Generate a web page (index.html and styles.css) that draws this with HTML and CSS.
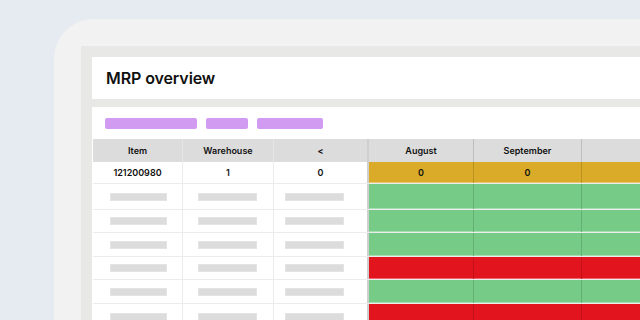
FILE: index.html
```html
<!DOCTYPE html>
<html lang="en">
<head>
    <meta charset="UTF-8" />
    <title>MRP overview</title>
    <link rel="stylesheet" href="styles.css">
</head>
<body>
    <div class="device">
        <div class="screen">
            <div class="title-card">
                <h1>MRP overview</h1>
            </div>

            <div class="table-card">
                <div class="filters">
                    <span class="pill pill-wide"></span>
                    <span class="pill pill-short"></span>
                    <span class="pill pill-mid"></span>
                </div>

                <div class="row head">
                    <div class="cell">Item</div>
                    <div class="cell">Warehouse</div>
                    <div class="cell">&lt;</div>
                    <div class="cell month">August</div>
                    <div class="cell month">September</div>
                    <div class="cell month"></div>
                </div>

                <div class="row r1">
                    <div class="cell">121200980</div>
                    <div class="cell">1</div>
                    <div class="cell">0</div>
                    <div class="cell month yellow">0</div>
                    <div class="cell month yellow">0</div>
                    <div class="cell month yellow"></div>
                </div>

                <div class="row r2">
                    <div class="cell blank"><span class="ph"></span></div>
                    <div class="cell blank"><span class="ph"></span></div>
                    <div class="cell blank"><span class="ph"></span></div>
                    <div class="cell month green"></div>
                    <div class="cell month green"></div>
                    <div class="cell month green"></div>
                </div>

                <div class="row r3">
                    <div class="cell blank"><span class="ph"></span></div>
                    <div class="cell blank"><span class="ph"></span></div>
                    <div class="cell blank"><span class="ph"></span></div>
                    <div class="cell month green"></div>
                    <div class="cell month green"></div>
                    <div class="cell month green"></div>
                </div>

                <div class="row r4">
                    <div class="cell blank"><span class="ph"></span></div>
                    <div class="cell blank"><span class="ph"></span></div>
                    <div class="cell blank"><span class="ph"></span></div>
                    <div class="cell month green"></div>
                    <div class="cell month green"></div>
                    <div class="cell month green"></div>
                </div>

                <div class="row r3">
                    <div class="cell blank"><span class="ph"></span></div>
                    <div class="cell blank"><span class="ph"></span></div>
                    <div class="cell blank"><span class="ph"></span></div>
                    <div class="cell month red"></div>
                    <div class="cell month red"></div>
                    <div class="cell month red"></div>
                </div>

                <div class="row r4">
                    <div class="cell blank"><span class="ph"></span></div>
                    <div class="cell blank"><span class="ph"></span></div>
                    <div class="cell blank"><span class="ph"></span></div>
                    <div class="cell month green"></div>
                    <div class="cell month green"></div>
                    <div class="cell month green"></div>
                </div>

                <div class="row r2">
                    <div class="cell blank"><span class="ph"></span></div>
                    <div class="cell blank"><span class="ph"></span></div>
                    <div class="cell blank"><span class="ph"></span></div>
                    <div class="cell month red"></div>
                    <div class="cell month red"></div>
                    <div class="cell month red"></div>
                </div>
            </div>
        </div>
    </div>
</body>
</html>
```

FILE: styles.css
```css
* {
    box-sizing: border-box;
    font-family: "Inter", "Liberation Sans", sans-serif;
}

html,
body {
    margin: 0;
    width: 640px;
    height: 320px;
    overflow: hidden;
}

body {
    background-color: #e6ebf2;
    padding: 19px 0 0 54px;
}

.device {
    height: 301px;
    overflow: hidden;
    background-color: #f2f2f2;
    border-top-left-radius: 40px;
    padding: 27px 0 0 27px;
}

.screen {
    width: 600px;
    height: 100%;
    background-color: #e8e8e6;
    padding: 11px 0 0 11px;
}

.title-card {
    height: 42px;
    background-color: #fff;
    margin-bottom: 8px;
    display: flex;
    align-items: center;
    padding-left: 14px;
}

h1 {
    margin: 0;
    font-size: 16px;
    font-weight: 600;
    color: #111;
    letter-spacing: -0.1px;
}

.table-card {
    background-color: #fff;
    padding-left: 1px;
}

.filters {
    display: flex;
    gap: 9px;
    padding: 11px 0 10px 12px;
}

.pill {
    display: block;
    height: 11px;
    border-radius: 2px;
    background-color: #d09bf1;
}

.pill-wide {
    width: 92px;
}

.pill-short {
    width: 42px;
}

.pill-mid {
    width: 66px;
}

.row {
    display: grid;
    grid-template-columns: 89px 91px 94px 106px 108px 100px;
    border-bottom: 1px solid #ececec;
}

.cell {
    display: flex;
    align-items: center;
    justify-content: center;
    font-size: 9px;
    font-weight: 600;
    color: #111;
    border-left: 1px solid #ececec;
}

.cell:first-child {
    border-left: none;
}

.cell.blank {
    justify-content: flex-start;
    padding-left: 17px;
}

.cell.blank:nth-child(2) {
    padding-left: 15px;
}

.cell.blank:nth-child(3) {
    padding-left: 11px;
}

.head {
    height: 23px;
    background-color: #dcdcdc;
    border-bottom: none;
}

.head .cell {
    border-left-color: #e6e6e6;
}

.head .cell.month,
.row .cell.month {
    border-left: 1px solid rgba(0, 0, 0, 0.14);
}

.row .cell:nth-child(4) {
    border-left: 2px solid #cfcfcf;
}

.r1 {
    height: 22px;
}

.r2 {
    height: 26px;
}

.r3 {
    height: 23px;
}

.r4 {
    height: 24px;
}

.ph {
    display: block;
    width: 59px;
    height: 8px;
    background-color: #dcdcdc;
    border: 1px solid #e4e4e4;
}

.cell:first-child .ph {
    width: 57px;
}

.yellow {
    background-color: #d9ab28;
}

.green {
    background-color: #76cc86;
}

.red {
    background-color: #e2141e;
}

.row .month.green,
.row .month.red,
.row .month.yellow {
    box-shadow: inset 0 -1px 0 rgba(255, 255, 255, 0.35);
}
```
